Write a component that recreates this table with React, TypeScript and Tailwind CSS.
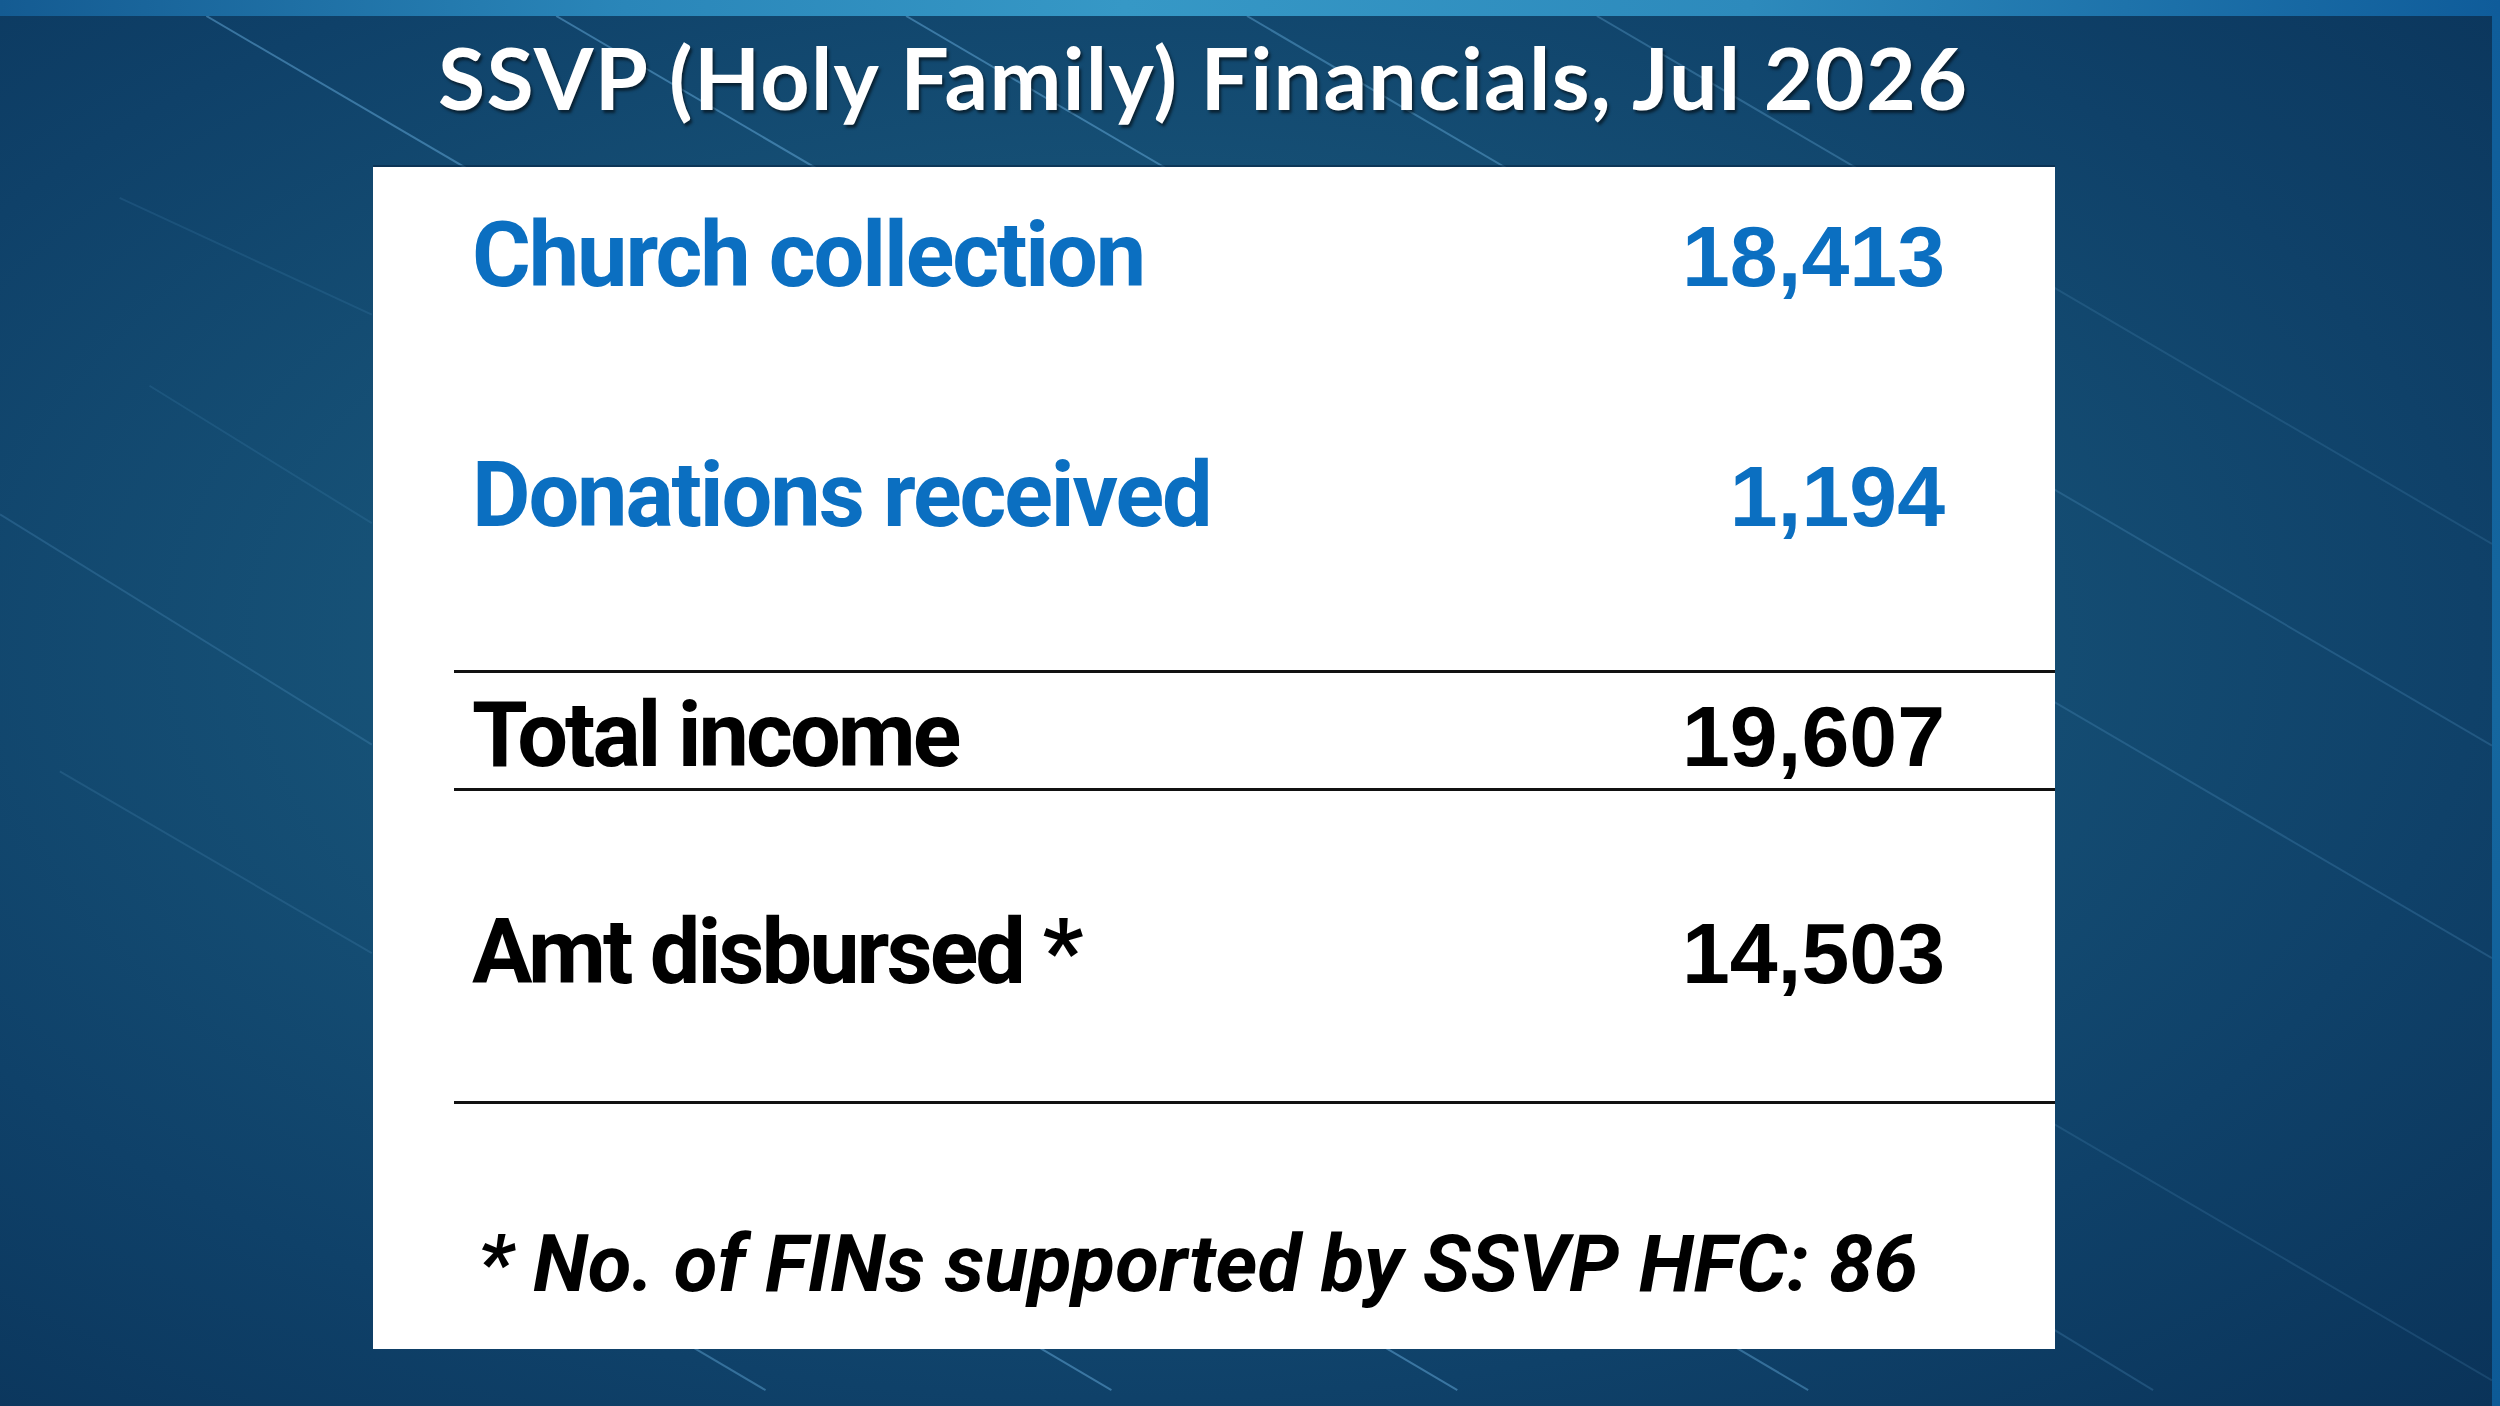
import React from 'react';

const Rule: React.FC<{ className?: string }> = ({ className = '' }) => (
    <div className={`h-[3px] bg-[#111] ml-[81px] ${className}`} />
);

const Row: React.FC<{ label: string; value: string; tone: 'blue' | 'black'; className?: string }> = ({ label, value, tone, className = '' }) => (
    <div className={`flex justify-between items-center pl-[99px] pr-[110px] leading-none ${className}`}>
        <span className={`font-['Roboto',sans-serif] font-bold text-[90px] ${tone === 'blue' ? 'text-[#0b6fc1] tracking-[-2.1px]' : 'text-black tracking-[-3px]'}`}>{label}</span>
        <span className={`font-['Liberation_Sans',sans-serif] font-bold text-[86px] ${tone === 'blue' ? 'text-[#0b6fc1]' : 'text-black'}`}>{value}</span>
    </div>
);

const Backdrop: React.FC = () => (
    <svg className="absolute inset-0 w-full h-full" viewBox="0 0 2500 1406" preserveAspectRatio="none">
        <g stroke="#6fb6e6" strokeWidth="2" fill="none">
            <line x1="207" y1="0" x2="700" y2="291" strokeOpacity="0.45" />
            <line x1="558" y1="0" x2="1000" y2="261" strokeOpacity="0.45" />
            <line x1="909" y1="0" x2="1300" y2="231" strokeOpacity="0.45" />
            <line x1="1251" y1="0" x2="1650" y2="236" strokeOpacity="0.4" />
            <line x1="1602" y1="0" x2="2000" y2="235" strokeOpacity="0.3" />
            <line x1="120" y1="184" x2="373" y2="302" strokeOpacity="0.12" />
            <line x1="150" y1="374" x2="373" y2="513" strokeOpacity="0.12" />
            <line x1="0" y1="504" x2="373" y2="737" strokeOpacity="0.2" />
            <line x1="60" y1="764" x2="373" y2="948" strokeOpacity="0.15" />
            <line x1="2056" y1="272" x2="2500" y2="534" strokeOpacity="0.15" />
            <line x1="2056" y1="476" x2="2500" y2="738" strokeOpacity="0.2" />
            <line x1="2056" y1="691" x2="2500" y2="953" strokeOpacity="0.2" />
            <line x1="2056" y1="1118" x2="2500" y2="1380" strokeOpacity="0.15" />
            <line x1="2056" y1="1326" x2="2160" y2="1390" strokeOpacity="0.2" />
            <line x1="674" y1="1334" x2="768" y2="1390" strokeOpacity="0.4" />
            <line x1="1021" y1="1334" x2="1115" y2="1390" strokeOpacity="0.45" />
            <line x1="1368" y1="1334" x2="1462" y2="1390" strokeOpacity="0.45" />
            <line x1="1720" y1="1334" x2="1814" y2="1390" strokeOpacity="0.4" />
        </g>
    </svg>
);

const App: React.FC = () => {
    return (
        <div className="w-[2500px] h-[1406px] flex flex-col overflow-hidden bg-[#0d4a7c]">
            <div className="h-[16px] shrink-0 bg-[linear-gradient(90deg,#145b92,#2a86b9_25%,#3698c6_45%,#2d8abc_70%,#0f5c9a)]" />
            <div className="flex-1 flex">
                <div className="flex-1 relative bg-[radial-gradient(ellipse_at_45%_45%,#1f5f86_0%,#175378_35%,#0f4169_70%,#0a3359_100%)]">
                    <Backdrop />
                    <div className="relative flex flex-col">
                        <h1 className="pl-[438px] pt-[18px] h-[151px] text-white font-['Lato',sans-serif] font-bold text-[86px] tracking-[1.3px] leading-none [text-shadow:2px_3px_3px_rgba(0,0,0,0.55)]">
                            SSVP (Holy Family) Financials, Jul 2026
                        </h1>
                        <div className="ml-[373px] w-[1682px] h-[1182px] bg-white flex flex-col pt-[44px] shadow-[0_-2px_0_rgba(8,40,70,0.6)]">
                            <Row label="Church collection" value="18,413" tone="blue" />
                            <Row label="Donations received" value="1,194" tone="blue" className="mt-[150px]" />
                            <Rule className="mt-[129px]" />
                            <Row label="Total income" value="19,607" tone="black" className="mt-[18px]" />
                            <Rule className="mt-[7px]" />
                            <Row label="Amt disbursed *" value="14,503" tone="black" className="mt-[117px]" />
                            <Rule className="mt-[103px]" />
                            <div className="mt-[120px] pl-[105px] leading-none font-['Roboto',sans-serif] font-bold italic text-[80px] text-black">
                                * No. of FINs supported by SSVP HFC: 86
                            </div>
                        </div>
                    </div>
                </div>
                <div className="w-[8px] shrink-0 bg-[linear-gradient(180deg,#0f5d9a,#15679f_50%,#0d5a96)]" />
            </div>
        </div>
    );
};

export default App;
